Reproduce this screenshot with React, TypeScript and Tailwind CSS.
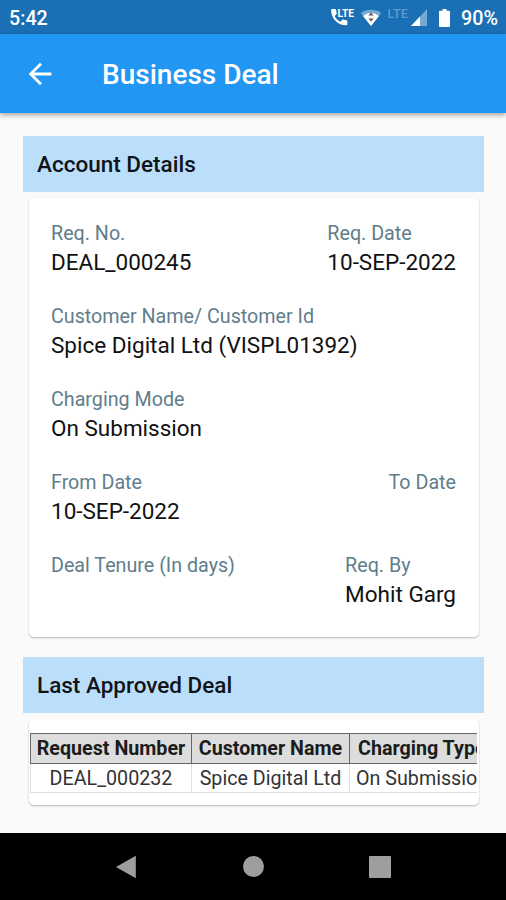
type FieldProps = {
  label: string
  value?: string
}

const requests = [
  { id: "DEAL_000232", customer: "Spice Digital Ltd", charging: "On Submission" },
]

function Field({ label, value }: FieldProps) {
  return (
    <div className="h-[60px] whitespace-nowrap">
      <p className="text-[19.7px] leading-[27px] text-[#607d8b]">{label}</p>
      <p className="text-[22.5px] leading-[31px] text-[#111111]">{value}</p>
    </div>
  )
}

function SectionTitle({ title }: { title: string }) {
  return (
    <h2 className="flex h-14 items-center bg-[#bbdefb] pt-0.5 pl-[14px] text-[22.5px] font-medium text-[#101418]">
      {title}
    </h2>
  )
}

function StatusBar() {
  return (
    <div className="flex h-[34px] items-center bg-[#1a6fb5] pt-[3px] pr-2 pl-[9px] text-[19.7px] font-medium text-white">
      <span>5:42</span>
      <div className="ml-auto flex items-center">
        {/* Call over LTE */}
        <svg width="25" height="22" viewBox="0 0 25 22" fill="currentColor">
          <path d="M1.1 3.2c0-.7.5-1.2 1.2-1.2h2.7c.6 0 1 .4 1.1 1 .1 1.1.3 2.1.6 3.1.1.4 0 .9-.3 1.2L4.7 9.2c1.3 2.4 3.2 4.3 5.6 5.6l1.8-1.9c.3-.3.7-.4 1.2-.3 1 .3 2 .5 3.1.6.6.1 1 .5 1 1.1v2.9c0 .6-.5 1.1-1.2 1.1C8.1 18.3 1.1 11.5 1.1 3.2z" />
          <text x="7.5" y="9.5" fontSize="10.5" fontWeight="700" textLength="16.5" lengthAdjust="spacingAndGlyphs">
            LTE
          </text>
        </svg>
        {/* Wi-Fi */}
        <svg className="ml-[5px]" width="22" height="18" viewBox="0 0 22 18">
          <path d="M11 17L.8 4C6.5-.3 15.500-.3 21.2 4z" fill="#72a9d5" />
          <path d="M11 17L3 6.9c4.7-3.9 11.3-3.9 16 0z" fill="#fff" />
          <path d="M11 3.5l2.7 3h-5.4zM11 12.500l2.7-3h-5.4z" fill="#6b5558" />
        </svg>
        <span className="ml-[6px] self-start pt-[4px] text-[12.5px] leading-[12px] font-medium tracking-[0.2px] text-[#5e9bce]">
          LTE
        </span>
        {/* Mobile signal */}
        <svg className="ml-[3px]" width="17" height="18" viewBox="0 0 17 18">
          <path d="M16 0v17H0z" fill="#72a9d5" />
          <path d="M9 7.5V17H0z" fill="#fff" />
        </svg>
        {/* Battery */}
        <svg className="mr-[11px] ml-[11px]" width="11" height="18" viewBox="0 0 11 18" fill="currentColor">
          <path d="M3.5 0h4v1.8H10c.6 0 1 .4 1 1V17c0 .6-.4 1-1 1H1c-.6 0-1-.4-1-1V2.8c0-.6.4-1 1-1h2.5z" />
        </svg>
        <span>90%</span>
      </div>
    </div>
  )
}

function AppBar() {
  return (
    <header className="relative flex h-[79px] items-center bg-[#2196f3] pl-[23px] text-white shadow-[0_2px_5px_rgba(0,0,0,0.35)]">
      <svg width="34" height="34" viewBox="0 0 24 24" fill="currentColor">
        <path d="M20 11H7.83l5.59-5.59L12 4l-8 8 8 8 1.410-1.410L7.83 13H20v-2z" />
      </svg>
      <h1 className="ml-[45px] pt-0.5 text-[28px] font-medium">Business Deal</h1>
    </header>
  )
}

function NavBar() {
  return (
    <nav className="mt-auto flex h-[67px] items-center bg-black pl-[115px] text-[#9e9e9e]">
      <svg width="22" height="24" viewBox="0 0 22 24" fill="currentColor">
        <path d="M20.8.8v22.4L1 12z" />
      </svg>
      <div className="ml-[106px] size-[21px] rounded-full bg-[#9e9e9e]" />
      <div className="ml-[105px] size-[22px] rounded-[1px] bg-[#9e9e9e]" />
    </nav>
  )
}

export default function App() {
  return (
    <div className="flex h-[900px] w-[506px] flex-col overflow-hidden bg-[#fafafa] font-[Roboto,sans-serif]">
      <StatusBar />
      <AppBar />

      <main className="pt-[23px] pr-[22px] pl-[23px]">
        <SectionTitle title="Account Details" />
        <div className="mt-[6px] mr-[5px] ml-1.5 flex h-[439px] flex-col gap-[23px] rounded-[5px] bg-white pt-[22px] pr-[23px] pl-[22px] shadow-[0_1px_2px_rgba(0,0,0,0.28)]">
          <div className="flex justify-between">
            <Field label="Req. No." value="DEAL_000245" />
            <Field label="Req. Date" value="10-SEP-2022" />
          </div>
          <Field label="Customer Name/ Customer Id" value="Spice Digital Ltd (VISPL01392)" />
          <Field label="Charging Mode" value="On Submission" />
          <div className="flex justify-between">
            <Field label="From Date" value="10-SEP-2022" />
            <Field label="To Date" />
          </div>
          <div className="flex justify-between">
            <Field label="Deal Tenure (In days)" />
            <Field label="Req. By" value="Mohit Garg" />
          </div>
        </div>

        <div className="mt-5">
          <SectionTitle title="Last Approved Deal" />
        </div>
        <div className="mt-[6px] mr-[5px] ml-1.5 h-[86px] rounded-[5px] bg-white pt-[14px] pr-[2px] pl-[1px] shadow-[0_1px_2px_rgba(0,0,0,0.28)]">
          <div className="overflow-hidden">
            <table className="w-[500px] table-fixed border-collapse text-center text-[19.7px] whitespace-nowrap">
              <colgroup>
                <col className="w-[161px]" />
                <col className="w-[158px]" />
                <col className="w-[181px]" />
              </colgroup>
              <thead>
                <tr className="h-[30px] bg-[#dddddd] leading-[28px] text-[#1c1c1c]">
                  <th className="border border-[#666666] p-0 font-bold">Request Number</th>
                  <th className="border border-[#666666] p-0 font-bold">Customer Name</th>
                  <th className="border border-[#666666] p-0 pl-2 text-left font-bold">Charging Type</th>
                </tr>
              </thead>
              <tbody>
                {requests.map((r) => (
                  <tr key={r.id} className="h-[29px] leading-[27px] text-[#333333]">
                    <td className="border border-[#e0e0e0] p-0 pt-px">{r.id}</td>
                    <td className="border border-[#e0e0e0] p-0 pt-px">{r.customer}</td>
                    <td className="border border-[#e0e0e0] p-0 pt-px pl-1.5 text-left">{r.charging}</td>
                  </tr>
                ))}
              </tbody>
            </table>
          </div>
        </div>
      </main>

      <NavBar />
    </div>
  )
}
